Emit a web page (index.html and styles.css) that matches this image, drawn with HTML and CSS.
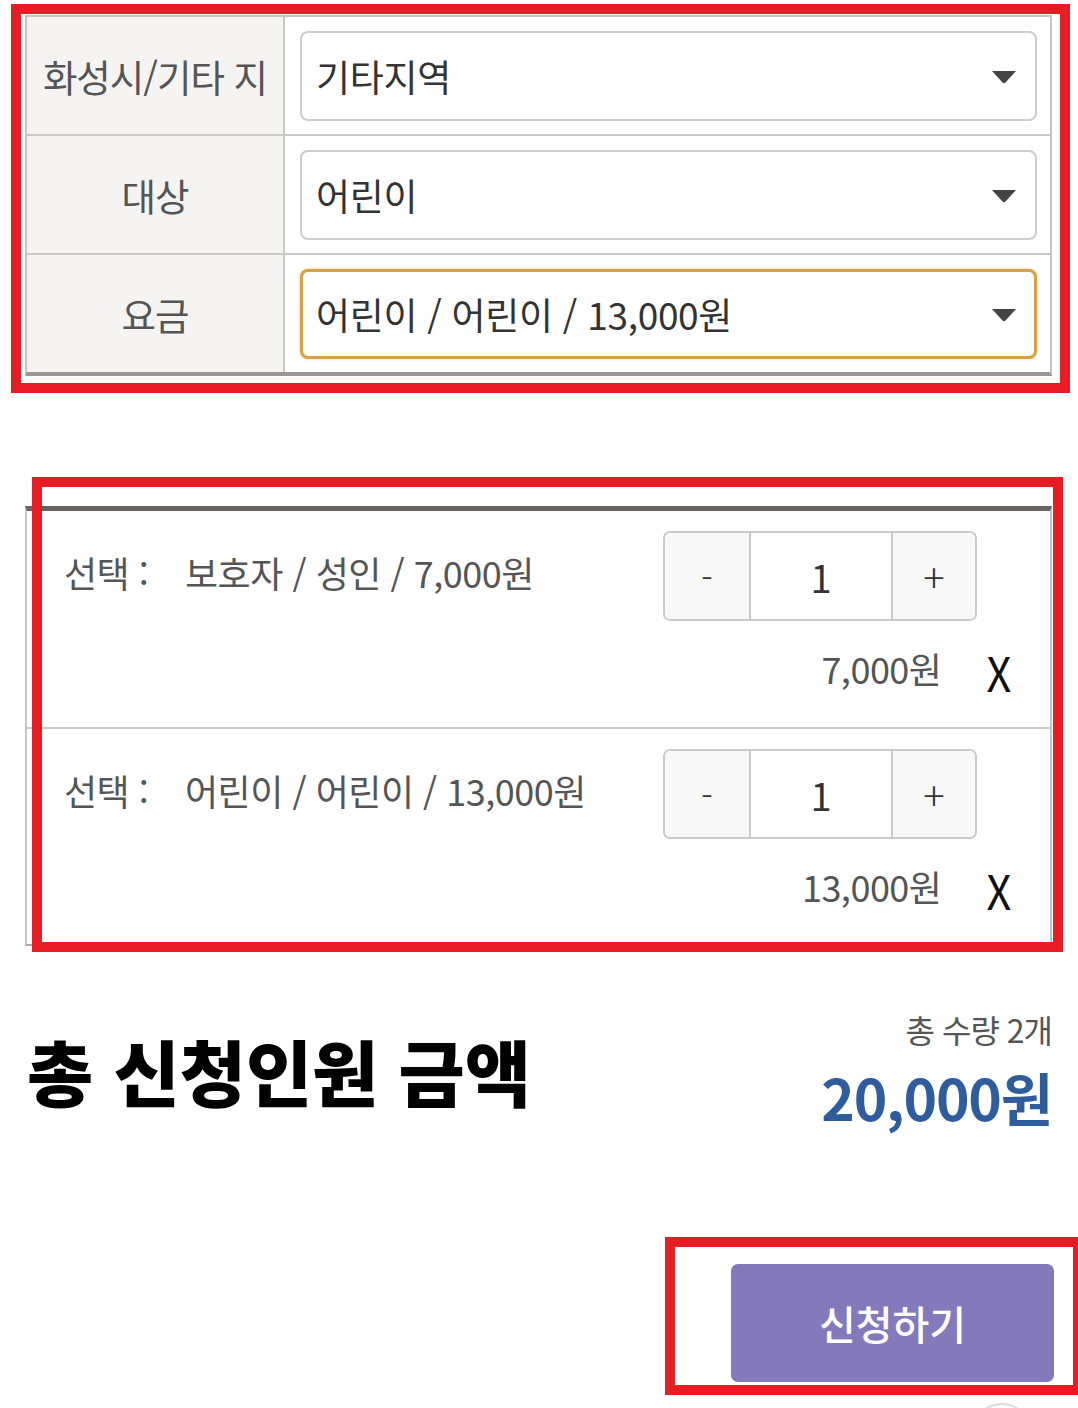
FILE: index.html
```html
<!DOCTYPE html>
<html lang="ko">
<head>
<meta charset="utf-8">
<title>신청</title>
<link rel="stylesheet" href="styles.css">
</head>
<body>
<div class="page">
  <div class="opt-table">
    <div class="opt-row">
      <div class="opt-label">화성시/기타 지</div>
      <div class="opt-cell">
        <div class="select">
          <span class="select-text">기타지역</span>
          <svg class="caret" width="26" height="14" viewBox="0 0 26 14"><path d="M1 1 H25 L14.5 12.5 Q13 14 11.5 12.5 Z" fill="#444"/></svg>
        </div>
      </div>
    </div>
    <div class="opt-row">
      <div class="opt-label">대상</div>
      <div class="opt-cell">
        <div class="select">
          <span class="select-text">어린이</span>
          <svg class="caret" width="26" height="14" viewBox="0 0 26 14"><path d="M1 1 H25 L14.5 12.5 Q13 14 11.5 12.5 Z" fill="#444"/></svg>
        </div>
      </div>
    </div>
    <div class="opt-row">
      <div class="opt-label">요금</div>
      <div class="opt-cell">
        <div class="select select-focus">
          <span class="select-text">어린이 / 어린이 / 13,000원</span>
          <svg class="caret" width="26" height="14" viewBox="0 0 26 14"><path d="M1 1 H25 L14.5 12.5 Q13 14 11.5 12.5 Z" fill="#444"/></svg>
        </div>
      </div>
    </div>
  </div>

  <div class="cart">
    <div class="item">
      <div class="item-top">
        <div class="item-name"><span class="item-key">선택 :</span><span class="item-val">보호자 / 성인 / 7,000원</span></div>
        <div class="qty">
          <span class="qty-btn">-</span>
          <span class="qty-num">1</span>
          <span class="qty-btn qty-plus">+</span>
        </div>
      </div>
      <div class="item-bottom">
        <span class="item-price">7,000원</span>
        <span class="item-del">X</span>
      </div>
    </div>
    <div class="item">
      <div class="item-top">
        <div class="item-name"><span class="item-key">선택 :</span><span class="item-val">어린이 / 어린이 / 13,000원</span></div>
        <div class="qty">
          <span class="qty-btn">-</span>
          <span class="qty-num">1</span>
          <span class="qty-btn qty-plus">+</span>
        </div>
      </div>
      <div class="item-bottom">
        <span class="item-price">13,000원</span>
        <span class="item-del">X</span>
      </div>
    </div>
  </div>

  <div class="total">
    <h2 class="total-title">총 신청인원 금액</h2>
    <div class="total-right">
      <div class="total-count">총 수량 2개</div>
      <div class="total-amount">20,000원</div>
    </div>
  </div>

  <div class="actions">
    <button class="apply-btn" type="button">신청하기</button>
  </div>

  <div class="mark mark-1"></div>
  <div class="mark mark-2"></div>
  <div class="mark mark-3"></div>
  <div class="float-circle"></div>
</div>
</body>
</html>
```
FILE: styles.css
```css
* { box-sizing: border-box; }
html, body { margin: 0; padding: 0; background: #fff; }
body {
  font-family: "Noto Sans CJK KR", "Noto Sans", sans-serif;
  color: #333;
  overflow: hidden;
  height: 1408px;
}
.page {
  position: relative;
  padding: 15px 26px 0 25px;
  height: 1408px;
}

/* option table */
.opt-table {
  border: 2px solid #c4c4c4;
  border-bottom: 4px solid #9b9797;
}
.opt-row {
  display: grid;
  grid-template-columns: 258px 1fr;
  height: 119px;
  border-bottom: 2px solid #c8c8c8;
}
.opt-row:last-child { border-bottom: 0; height: 117px; }
.opt-label {
  background: #f5f4f2;
  border-right: 2px solid #c8c8c8;
  display: flex;
  align-items: center;
  justify-content: center;
  font-size: 37.5px;
  letter-spacing: -1px;
  color: #555;
  white-space: nowrap;
  overflow: hidden;
}
.opt-cell {
  display: flex;
  align-items: center;
  padding: 0 13px 0 15px;
}
.select {
  flex: 1;
  height: 90px;
  border: 2px solid #cdcdcd;
  border-radius: 8px;
  display: flex;
  align-items: center;
  justify-content: space-between;
  padding: 0 18px 0 14px;
  background: #fff;
}
.select-focus {
  border: 3px solid #d6a245;
  box-shadow: 0 0 3px rgba(214, 162, 69, 0.55);
  padding-left: 13px;
  padding-right: 17px;
}
.select-text {
  font-size: 37px;
  letter-spacing: -0.3px;
  color: #333;
  white-space: nowrap;
}
.caret { display: block; margin-top: 2px; }

/* cart */
.cart {
  margin-top: 130px;
  border-top: 5px solid #676362;
  border-left: 2px solid #c4c4c4;
  border-right: 2px solid #c4c4c4;
  border-bottom: 2px solid #a8a8a8;
}
.item {
  height: 218px;
  padding: 20px 37px 0 37px;
  border-bottom: 2px solid #c8c8c8;
}
.item:last-child { border-bottom: 0; height: 215px; }
.item-top {
  display: flex;
  justify-content: space-between;
  align-items: flex-start;
}
.item-name {
  padding-top: 18px;
  line-height: 46px;
  font-size: 36px;
  color: #555;
  white-space: nowrap;
  letter-spacing: -0.5px;
}
.item-key { display: inline-block; width: 121px; }
.qty {
  width: 314px;
  height: 90px;
  margin-right: 36px;
  border: 2px solid #cbcbcb;
  border-radius: 7px;
  overflow: hidden;
  display: flex;
}
.qty-btn {
  width: 84px;
  background: #f8f8f8;
  display: flex;
  align-items: center;
  justify-content: center;
  font-size: 34px;
  color: #333;
  font-weight: 300;
}
.qty-plus { font-size: 40px; border-left: 2px solid #cbcbcb; }
.qty-num {
  flex: 1;
  display: flex;
  align-items: center;
  justify-content: center;
  border-left: 2px solid #cbcbcb;
  font-size: 38px;
  color: #333;
}
.item-bottom {
  display: flex;
  justify-content: flex-end;
  align-items: center;
  margin-top: 22px;
  height: 50px;
}
.item-price {
  font-size: 36px;
  color: #555;
  letter-spacing: -0.5px;
}
.item-del {
  margin-left: 44px;
  font-size: 48px;
  color: #111;
  line-height: 1;
  margin-top: 6px;
  transform: scaleX(0.9);
}

/* total */
.total {
  margin-top: 63px;
  display: flex;
  justify-content: space-between;
  align-items: center;
  padding-left: 2px;
}
.total-title {
  margin: 0;
  font-size: 72px;
  font-weight: 900;
  color: #000;
  letter-spacing: 0;
  line-height: 80px;
}
.total-right { text-align: right; }
.total-count {
  font-size: 32px;
  color: #555;
  line-height: 40px;
  letter-spacing: -1px;
}
.total-amount {
  margin-top: 12px;
  font-size: 57px;
  font-weight: 700;
  color: #2f5c9c;
  line-height: 70px;
  letter-spacing: -1.2px;
}

/* button */
.actions {
  margin-top: 133px;
  display: flex;
  justify-content: flex-end;
  margin-right: -2px;
}
.apply-btn {
  width: 323px;
  height: 118px;
  border: 0;
  border-radius: 7px;
  background: #8479bb;
  color: #fff;
  font-family: inherit;
  font-size: 40px;
  font-weight: 500;
  letter-spacing: 0;
}

/* annotation marks */
.mark {
  position: absolute;
  border: 10px solid #e81c24;
  pointer-events: none;
}
.mark-1 { left: 11px; top: 4px; width: 1059px; height: 389px; }
.mark-2 { left: 32px; top: 477px; width: 1031px; height: 475px; }
.mark-3 { left: 665px; top: 1237px; width: 418px; height: 158px; }
.float-circle {
  position: absolute;
  left: 972px;
  top: 1403px;
  width: 60px;
  height: 60px;
  border-radius: 50%;
  border: 2px solid #ddd;
  background: #fff;
}
```
